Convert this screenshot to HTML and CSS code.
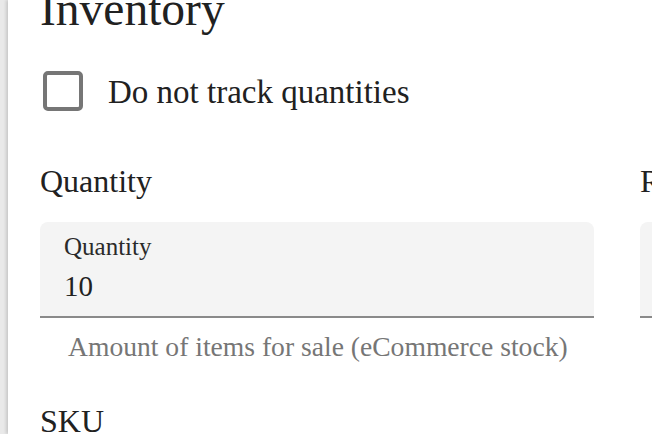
FILE: index.html
```html
<!DOCTYPE html>
<html>
<head>
<meta charset="utf-8" />
<title>Inventory</title>
<link rel="stylesheet" href="styles.css">
</head>
<body>
<div class="panel">
	<h2 class="title">Inventory</h2>
	<label class="check-row">
		<span class="checkbox"></span>
		<span class="check-label">Do not track quantities</span>
	</label>
	<div class="columns">
		<div class="col">
			<div class="headline">Quantity</div>
			<div class="field">
				<div class="field-label">Quantity</div>
				<div class="field-value">10</div>
			</div>
			<div class="helper">Amount of items for sale (eCommerce stock)</div>
			<div class="headline sku">SKU</div>
		</div>
		<div class="col">
			<div class="headline">Reorder level</div>
			<div class="field">
				<div class="field-label">Reorder level</div>
				<div class="field-value">2</div>
			</div>
		</div>
	</div>
</div>
</body>
</html>
```

FILE: styles.css
```css
*{
	box-sizing: border-box;
	font-family: "Liberation Serif", serif;
}

html, body{
	margin: 0;
	height: 100%;
	overflow: hidden;
}

body{
	background-color: #e9e9e9;
}

.panel{
	display: flow-root;
	margin-left: 8px;
	height: 100%;
	background-color: #ffffff;
	box-shadow: -2px 0 3px rgba(0, 0, 0, 0.14);
	padding-left: 32px;
	color: #212121;
}

.title{
	margin: -17px 0 0 0;
	font-size: 47.5px;
	line-height: 52px;
	font-weight: normal;
}

.check-row{
	display: flex;
	align-items: center;
	gap: 25px;
	margin-top: 36px;
	padding-left: 3px;
	height: 40px;
}

.checkbox{
	width: 40px;
	height: 40px;
	border: 4px solid #767676;
	border-radius: 5px;
}

.check-label{
	font-size: 33px;
	line-height: 40px;
	padding-top: 1px;
}

.columns{
	display: grid;
	grid-template-columns: 554px 554px;
	gap: 46px;
	margin-top: 50px;
}

.headline{
	font-size: 32px;
	line-height: 40px;
}

.field{
	margin-top: 21px;
	height: 96px;
	background-color: #f4f4f4;
	border-radius: 8px 8px 0 0;
	border-bottom: 2px solid #8a8a8a;
	padding: 10px 24px 0 24px;
}

.field-label{
	font-size: 25px;
	line-height: 30px;
	color: #2a2a2a;
}

.field-value{
	margin-top: 7px;
	font-size: 29px;
	line-height: 34px;
}

.helper{
	margin-top: 13px;
	padding-left: 28px;
	font-size: 27.6px;
	line-height: 32px;
	color: #767676;
}

.sku{
	margin-top: 38px;
}
```
